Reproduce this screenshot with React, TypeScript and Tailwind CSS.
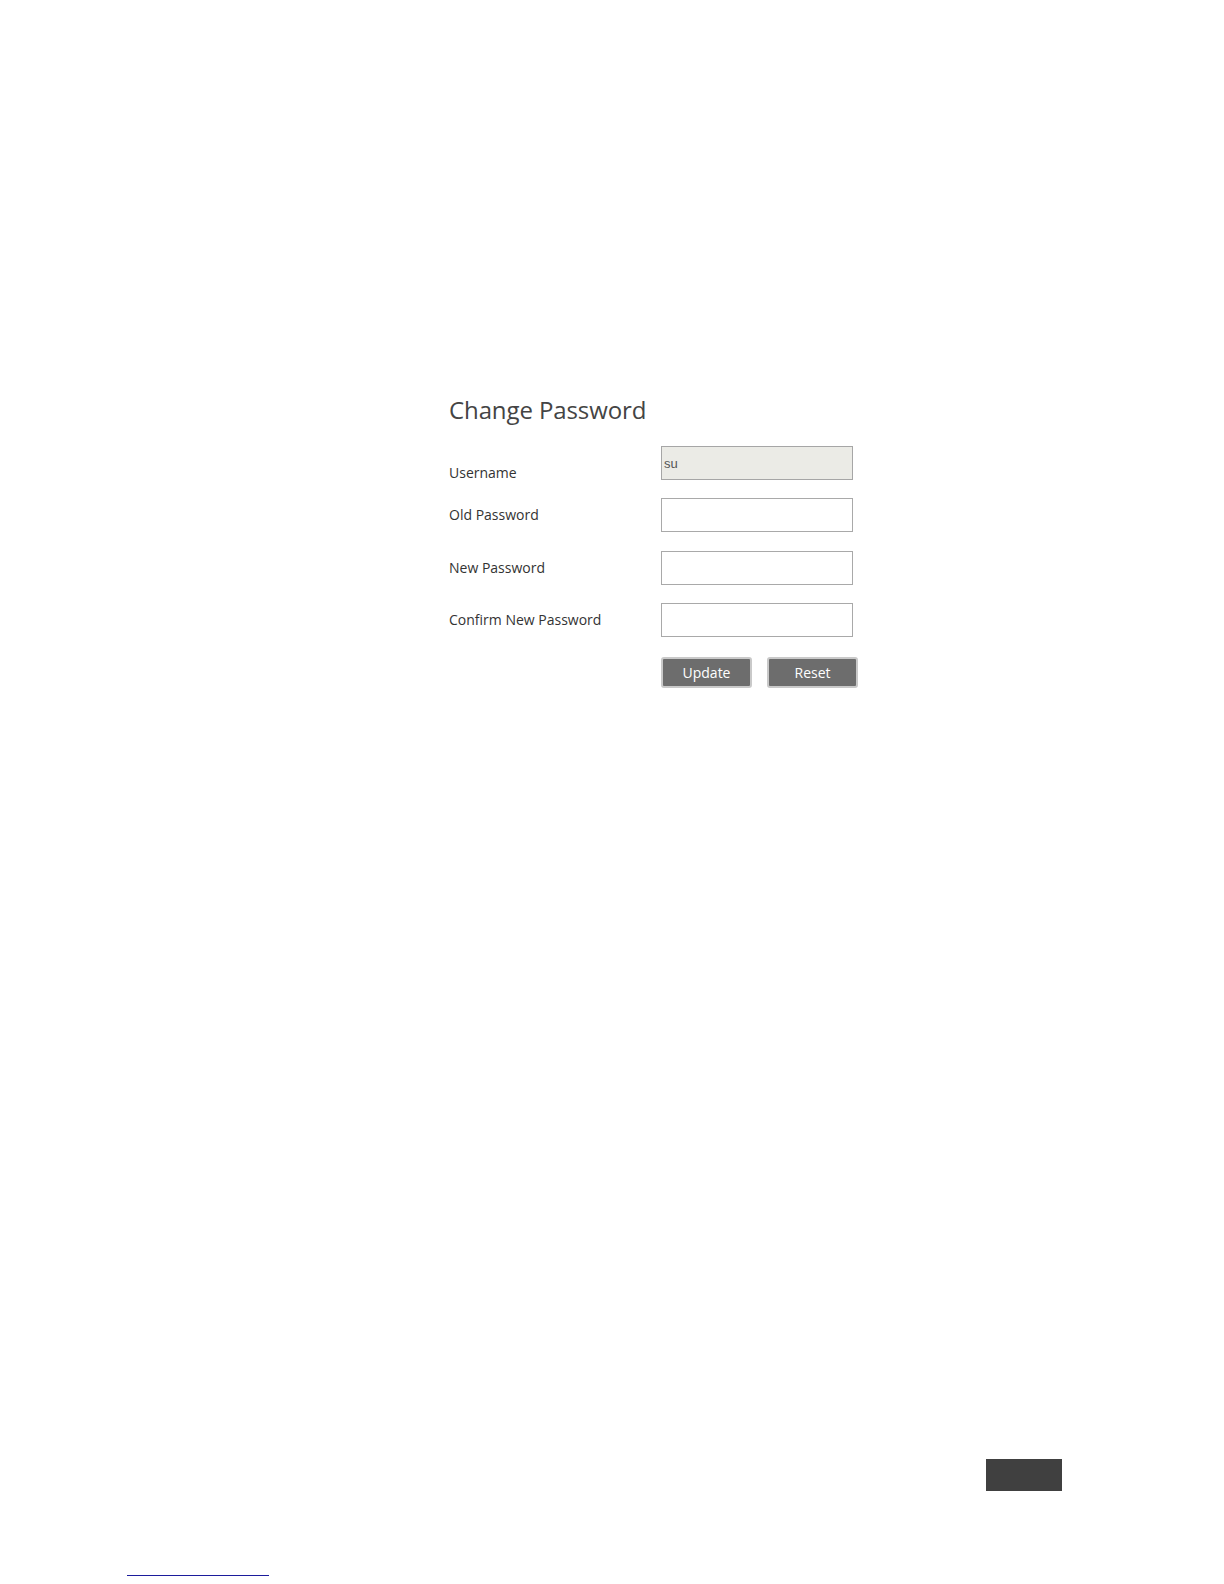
import React from 'react';

const labelCls = "text-[14px] text-[#333333] leading-[20px]";
const inputBase =
  "w-[192px] h-[34px] border px-[2px] text-[13px] text-[#555] outline-none";
const inputCls = inputBase + " bg-white border-[#a9a9a9]";

const Row: React.FC<{ label: string; children: React.ReactNode; className?: string }> = ({
  label,
  children,
  className,
}) => (
  <div className={"flex items-center " + (className ?? "")}>
    <div className="w-[212px] pb-[2px]">
      <span className={labelCls}>{label}</span>
    </div>
    {children}
  </div>
);

const App: React.FC = () => {
  return (
    <div
      className="w-[1224px] h-[1584px] bg-white flex flex-col"
      style={{ fontFamily: '"Open Sans", "Noto Sans", sans-serif' }}
    >
      <div className="pt-[394px] pl-[449px]">
        <h2 className="text-[24px] leading-[32px] text-[#444444] font-normal tracking-[-0.1px]">
          Change Password
        </h2>

        <div className="mt-[20px] flex items-start h-[34px]">
          <div className="w-[212px] h-[34px] pt-[14px]">
            <span className={labelCls}>Username</span>
          </div>
          <input
            className={inputBase + " bg-[#ebebe6] border-[#a6a6a6]"}
            style={{ fontFamily: '"Liberation Sans", Arial, sans-serif' }}
            defaultValue="su"
            readOnly
          />
        </div>

        <Row label="Old Password" className="mt-[18px]">
          <input type="password" className={inputCls} />
        </Row>
        <Row label="New Password" className="mt-[19px]">
          <input type="password" className={inputCls} />
        </Row>
        <Row label="Confirm New Password" className="mt-[18px]">
          <input type="password" className={inputCls} />
        </Row>

        <div className="mt-[20px] flex gap-[15px] pl-[212px]">
          <button className="w-[91px] h-[31px] rounded-[3px] border-2 border-[#c9c9c9] bg-[#6d6d6d] text-white text-[14px] leading-none">
            Update
          </button>
          <button className="w-[91px] h-[31px] rounded-[3px] border-2 border-[#c9c9c9] bg-[#6d6d6d] text-white text-[14px] leading-none">
            Reset
          </button>
        </div>
      </div>

      <div className="flex-1" />

      <div className="pl-[986px]">
        <div className="w-[76px] h-[32px] bg-[#404040]" />
      </div>
      <div className="pl-[127px] mt-[84px] mb-[8px]">
        <div className="w-[142px] h-[1px] bg-[#1c1c9c]" />
      </div>
    </div>
  );
};

export default App;
